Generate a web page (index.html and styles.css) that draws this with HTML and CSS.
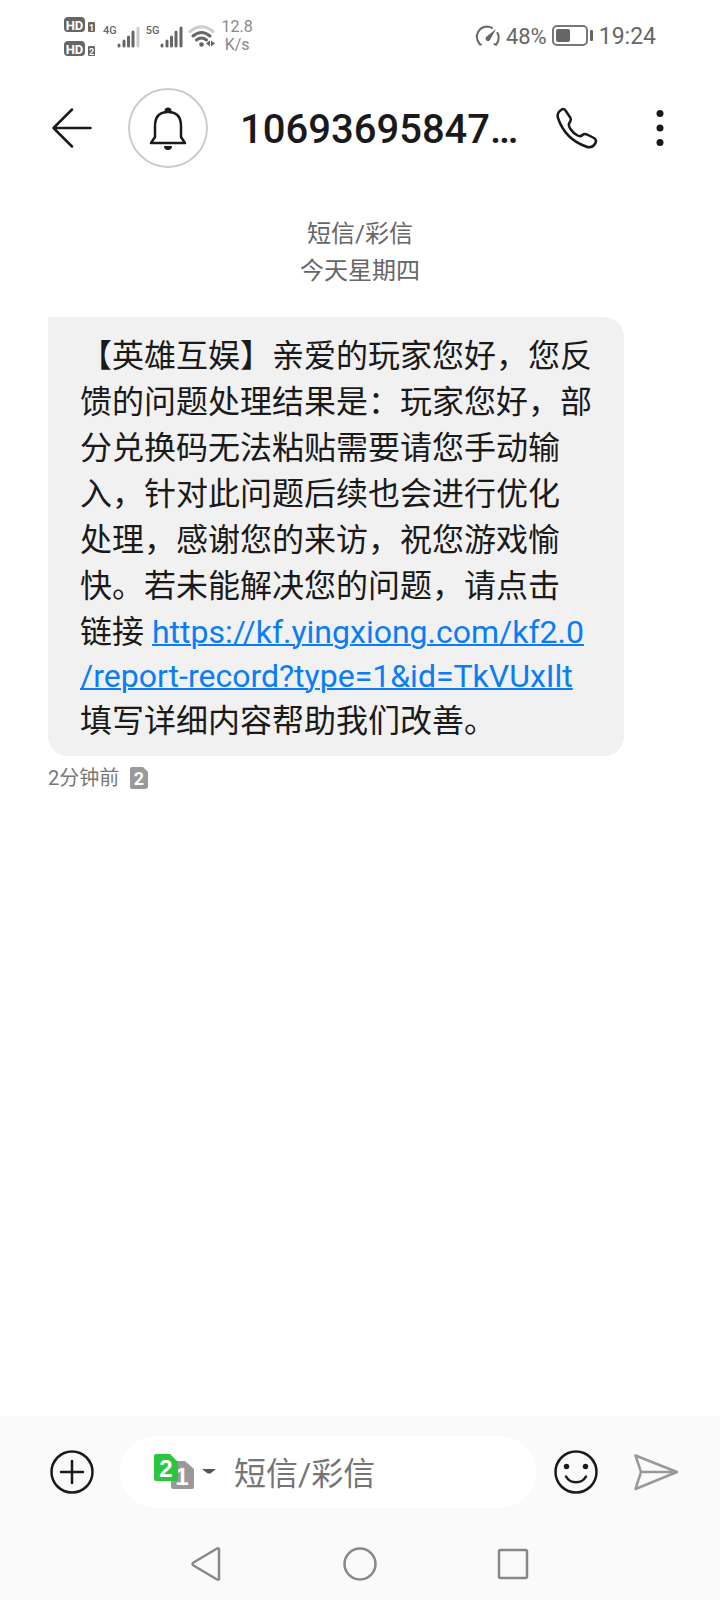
FILE: index.html
```html
<!DOCTYPE html>
<html lang="zh-CN">
<head>
	<meta charset="UTF-8">
	<meta name="viewport" content="width=device-width, initial-scale=1">
	<title>短信/彩信</title>
	<link rel="stylesheet" href="styles.css">
</head>
<body>
<div class="status">
	<div class="status-left">
		<svg class="hd" width="34" height="40" viewBox="0 0 34 40">
			<rect x="1" y="1" width="21" height="15" rx="4"/>
			<rect x="25" y="6" width="7" height="10" rx="1"/>
			<rect x="1" y="25" width="21" height="15" rx="4"/>
			<rect x="25" y="30" width="7" height="10" rx="1"/>
			<text x="11.500" y="13.500" font-size="13">HD</text>
			<text x="28.500" y="14.500" font-size="9">1</text>
			<text x="11.500" y="37.500" font-size="13">HD</text>
			<text x="28.500" y="38.500" font-size="9">2</text>
		</svg>
		<div class="signal">
			<span>4G</span>
			<svg width="23" height="24" viewBox="0 0 23 24">
				<path d="M2 21v1M7 17v5M11.500 13v9M16 8v14"/>
				<path class="off" d="M21 4v18"/>
			</svg>
		</div>
		<div class="signal">
			<span>5G</span>
			<svg width="23" height="24" viewBox="0 0 23 24">
				<path d="M2 21v1M7 17v5M11.500 13v9M16 8v14M21 4v18"/>
			</svg>
		</div>
		<svg class="wifi" width="28" height="24" viewBox="0 0 28 24">
			<path class="off" d="M2 7.500Q13.500-2 25 7.500"/>
			<path d="M5 12Q13.500 5 22 12M8.500 16Q13.500 12 18.500 16"/>
			<circle cx="13.500" cy="20.500" r="2.300"/>
			<path class="arrow" d="M18 19.500l4-3v6zM27 19.500l-4-3v6z"/>
		</svg>
		<p class="speed">12.8<br>K/s</p>
	</div>
	<div class="status-right">
		<svg class="gauge" width="26" height="24" viewBox="0 0 26 24">
			<path d="M6 20.500H5Q1 16 2 11 4 3 12 2.500 15 2.500 17 4M22.500 9Q25.500 15 21 21L19.500 20"/>
			<path class="needle" d="M21 5l-6 11a2.500 2.500 0 0 1-4-3z"/>
		</svg>
		<span>48%</span>
		<svg class="battery" width="42" height="22" viewBox="0 0 42 22">
			<rect class="case" x="1" y="1" width="34" height="19" rx="4"/>
			<rect x="4" y="4" width="14" height="13" rx="2"/>
			<rect x="38" y="5" width="3" height="11" rx="1"/>
		</svg>
		<time>19:24</time>
	</div>
</div>

<header class="header">
	<button class="icon-btn" type="button" aria-label="返回">
		<svg width="48" height="48" viewBox="0 0 48 48"><path d="M24 5.500L5.500 24 24 42.500M5.500 24h37"/></svg>
	</button>
	<div class="avatar">
		<svg width="48" height="48" viewBox="0 0 48 48">
			<path d="M7 39l4-6V22Q11 8 24 8t13 14v11l4 6z"/>
			<path class="fill" d="M20.500 7a3.500 3.500 0 0 1 7 0zM20 42h8a4 4 0 0 1-8 0z"/>
		</svg>
	</div>
	<h1 class="title">10693695847…</h1>
	<button class="icon-btn" type="button" aria-label="拨打电话">
		<svg width="48" height="48" viewBox="0 0 48 48">
			<path d="M9 6Q12 4 13.500 6.500L18.500 14Q19.500 16 18 18 15.500 20.500 18.500 25 21 29 25.500 31.500 28.500 33 30.500 31 32 29.500 35 30.500L42 34Q45 36 43.500 39 40 45 34 42.500 13 35 6 14 4.500 9 9 6z"/>
		</svg>
	</button>
	<button class="icon-btn" type="button" aria-label="更多">
		<svg width="48" height="48" viewBox="0 0 48 48">
			<g class="fill"><circle cx="24" cy="9.500" r="3.500"/><circle cx="24" cy="24" r="3.500"/><circle cx="24" cy="38.500" r="3.500"/></g>
		</svg>
	</button>
</header>

<main class="thread">
	<p class="day">短信/彩信<br>今天星期四</p>
	<div class="bubble">
		<p><span class="han">【英雄互娱】亲爱的玩家您好，您反馈的问题处理结果是：玩家您好，部分兑换码无法粘贴需要请您手动输入，针对此问题后续也会进行优化处&NoBreak;理，感谢您的来访，祝您游戏愉快。若未能解决您的问题，请点击链&NoBreak;接</span> <a href="#">https://kf.yingxiong.com/kf2.0<wbr>/report-record?type=1&amp;id=TkVUxIlt</a><span class="han">填写详细内容帮助我们改善。</span></p>
	</div>
	<div class="sent">
		<span>2分钟前</span>
		<svg width="20" height="24" viewBox="0 0 20 24">
			<path d="M3 1h11l5 5v14q0 3-3 3H3q-2 0-2-2V3q0-2 2-2z"/>
			<text x="10" y="18.500" font-size="18">2</text>
		</svg>
	</div>
</main>

<footer class="footer">
	<form class="composer">
		<button class="icon-btn" type="button" aria-label="添加">
			<svg width="48" height="48" viewBox="0 0 48 48"><circle cx="24" cy="24" r="20.500"/><path d="M13 24h22M24 13v22"/></svg>
		</button>
		<div class="field">
			<button class="sim" type="button" aria-label="切换 SIM 卡">
				<svg width="64" height="38" viewBox="0 0 64 38">
					<path class="sim1" d="M20 8h12l9 8v18q0 2-2 2H20q-2 0-2-2V10q0-2 2-2z"/>
					<text x="29" y="32" font-size="24">1</text>
					<path class="sim2" d="M3 1h14l8 8v17q0 2-2 2H3q-2 0-2-2V3q0-2 2-2z"/>
					<text x="13" y="23.500" font-size="24">2</text>
					<path class="caret" d="M49 16h14l-5 4q-2 1-4 0z"/>
				</svg>
			</button>
			<input type="text" placeholder="短信/彩信" aria-label="短信/彩信">
		</div>
		<button class="icon-btn" type="button" aria-label="表情">
			<svg width="48" height="48" viewBox="0 0 48 48">
				<circle cx="24" cy="24" r="20.500"/>
				<path d="M14 28.500a11.500 11.500 0 0 0 20 0"/>
				<g class="fill"><circle cx="14.500" cy="18.500" r="2.700"/><circle cx="33.500" cy="18.500" r="2.700"/></g>
			</svg>
		</button>
		<button class="icon-btn send" type="submit" aria-label="发送">
			<svg width="48" height="48" viewBox="0 0 48 48"><path d="M3.500 7.500L45 24 3.500 41 9 24zM9 24h35"/></svg>
		</button>
	</form>
	<nav class="nav">
		<button type="button" aria-label="后退"><svg width="36" height="36" viewBox="0 0 36 36"><path d="M29 2.500q2-1 2 1v29q0 2-2 1L5.500 19.500q-2-1.500 0-3z"/></svg></button>
		<button type="button" aria-label="主页"><svg width="36" height="36" viewBox="0 0 36 36"><circle cx="18" cy="18" r="15.500"/></svg></button>
		<button type="button" aria-label="最近任务"><svg width="36" height="36" viewBox="0 0 36 36"><rect x="3" y="4" width="28" height="28" rx="1.500"/></svg></button>
	</nav>
</footer>
</body>
</html>
```

FILE: styles.css
```css
*{margin:0;padding:0;box-sizing:border-box;}
body{display:flex;flex-direction:column;min-height:100vh;background:#fff;color:#1a1a1a;font-family:Roboto,"Noto Sans CJK SC",sans-serif;}
button{display:block;border:0;background:none;cursor:pointer;}
svg{display:block;fill:none;stroke-linecap:round;stroke-linejoin:round;}
svg text{stroke:none;fill:#fff;text-anchor:middle;font-weight:700;}

/* status bar */
.status{display:flex;justify-content:space-between;height:72px;padding:0 64px 0 63px;color:#666;}
.status-left,.status-right{display:flex;align-items:center;}
.status svg{stroke:#666;stroke-width:3;}
.status .hd{fill:#666;stroke:none;}
.signal{display:flex;align-items:flex-start;margin-left:6px;}
.signal span{font-size:11px;line-height:14px;font-weight:500;}
.status .off{stroke:#ccc;}
.wifi{margin-left:5px;}
.wifi circle,.wifi .arrow{fill:#666;stroke:none;}
.speed{margin-left:6px;color:#888;font-size:16px;line-height:18px;text-align:center;}
.status-right{gap:5px;font-size:23px;}
.status .gauge{stroke-width:2;}
.gauge .needle{fill:#666;stroke:none;}
.status .battery{fill:#666;stroke:none;}
.battery .case{fill:none;stroke:#777;stroke-width:2;}
.status-right span{font-size:22px;}

/* top bar */
.header{display:flex;align-items:center;height:112px;padding:0 36px 0 48px;}
.icon-btn{flex:none;width:48px;height:48px;}
.icon-btn svg,.avatar svg{stroke:#1a1a1a;stroke-width:2.500;}
.icon-btn .fill,.avatar .fill{fill:#1a1a1a;stroke:none;}
.avatar{display:flex;flex:none;align-items:center;justify-content:center;width:80px;height:80px;margin:0 32px;border:2px solid #ccc;border-radius:50%;}
.title{flex:1;min-width:0;padding-top:4px;overflow:hidden;white-space:nowrap;text-overflow:ellipsis;font-size:40px;line-height:48px;font-weight:500;}
.header .icon-btn + .icon-btn{margin-left:36px;}

/* messages */
.thread{flex:1;padding:32px 48px;}
.day{color:#666;font-size:24px;line-height:37px;text-align:center;}
.bubble{width:fit-content;max-width:576px;margin-top:27px;padding:16px 32px 12px;border-radius:0 20px 20px 20px;background:#f1f1f1;font-size:32px;line-height:43px;}
.han{line-height:46px;}
.bubble a{color:#0a7df5;text-decoration:underline;text-decoration-thickness:2px;}
.sent{display:flex;align-items:center;gap:10px;margin-top:6px;color:#777;font-size:20px;line-height:32px;}
.sent svg{fill:#999;}

/* input row and system keys */
.footer{background:#fafafa;}
.composer{display:flex;align-items:center;padding:20px 40px 20px 48px;}
.field{display:flex;flex:1;align-items:center;min-width:0;height:72px;margin:0 16px 0 24px;padding:0 32px 0 33px;border-radius:36px;background:#fff;}
.sim{flex:none;margin-right:17px;}
.sim1{fill:#999;}
.sim2{fill:#2bc540;}
.caret{fill:#555;}
.field input{flex:1;min-width:0;height:52px;padding-top:3px;border:0;outline:0;background:none;color:#1a1a1a;font:32px Roboto,"Noto Sans CJK SC",sans-serif;}
.field input::placeholder{color:#757575;}
.composer .send{margin-left:32px;}
.send svg{stroke:#999;}
.nav{display:grid;grid-template-columns:repeat(3,1fr);justify-items:center;align-items:center;width:64%;height:72px;margin:0 auto;}
.nav svg{stroke:#888;stroke-width:2.500;}
```
